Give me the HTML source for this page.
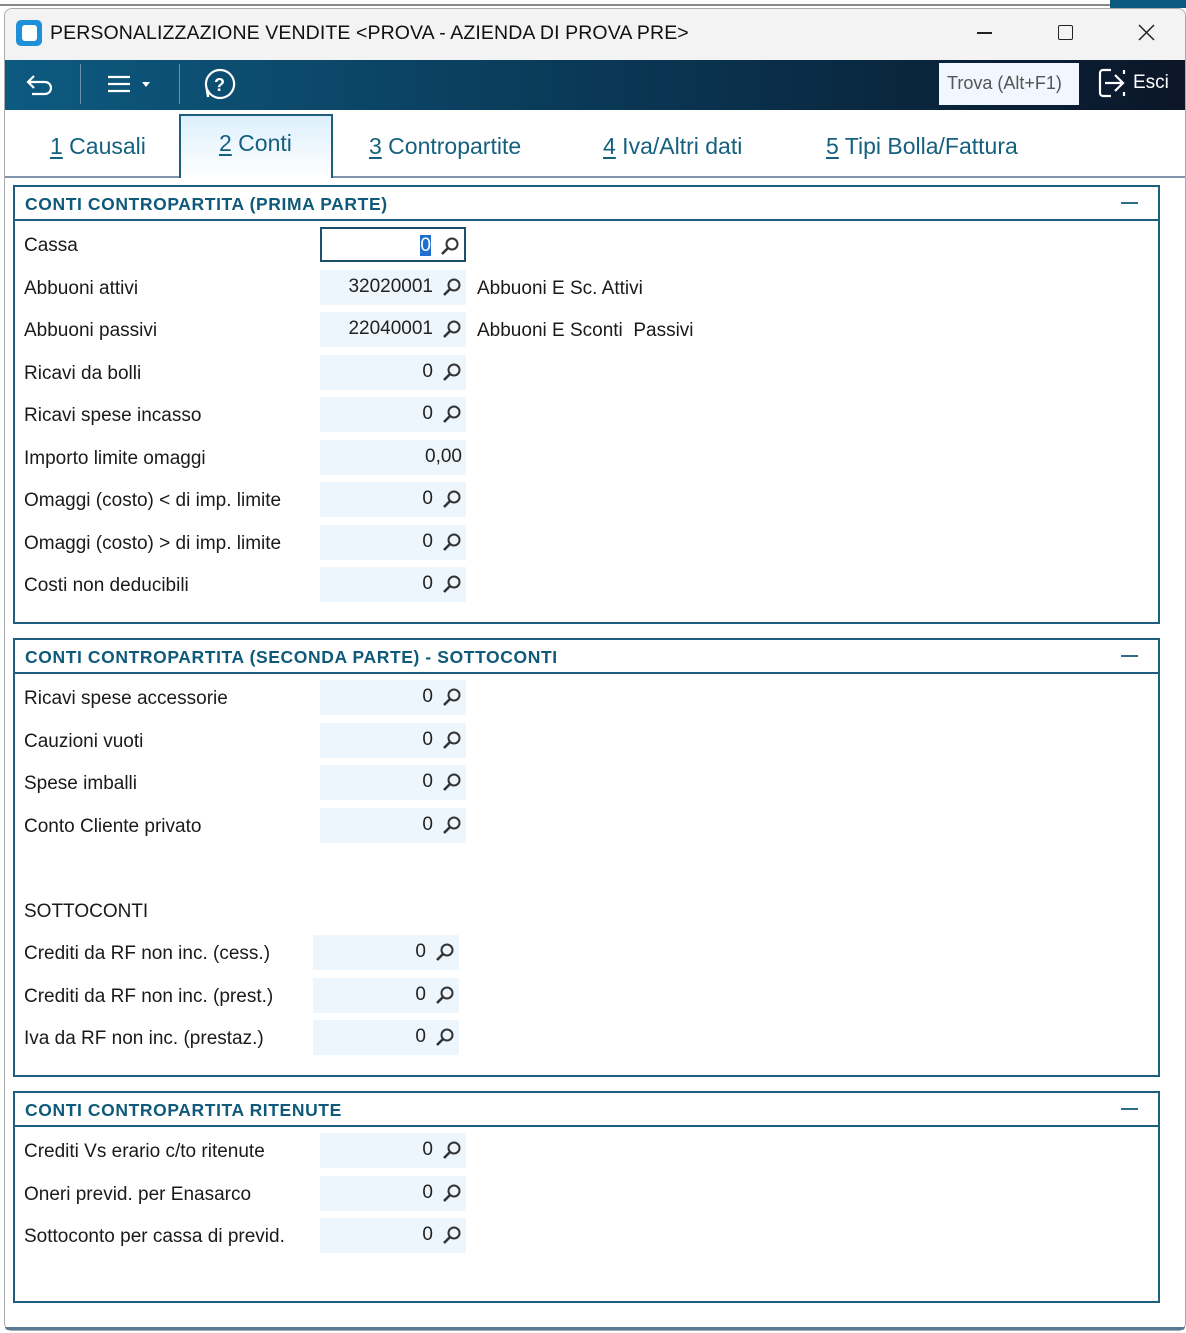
<!DOCTYPE html>
<html><head><meta charset="utf-8"><style>
*{margin:0;padding:0;box-sizing:border-box}
body{width:1186px;height:1333px;background:#fff;position:relative;overflow:hidden;font-family:"Liberation Sans",sans-serif;color:#111}
.a{position:absolute}
.lbl{position:absolute;left:24px;font-size:19px;line-height:22px;color:#1a1a1a;white-space:nowrap}
.fld{position:absolute;width:146px;height:35px;background:#eef6fd}
.fld .v{position:absolute;right:33px;top:6px;font-size:19px;line-height:22px;color:#222}
.fld svg{position:absolute;right:3px;top:7px}
.sec{position:absolute;left:13px;width:1147px;border:2px solid #1d5f7d}
.sec .h{height:34px;border-bottom:2px solid #1d5f7d;font-weight:bold;font-size:17.5px;letter-spacing:0.6px;color:#0f5a7a;padding:7px 0 0 10px;position:relative}
.sec .h:after{content:"";position:absolute;right:20px;top:15px;width:17px;height:2px;background:#2d6d8b}
.tab{position:absolute;top:133px;font-size:23px;color:#15607f;white-space:nowrap}
.tab u{text-underline-offset:3px}
</style></head><body>
<div class="a" style="left:0;top:4px;width:1110px;height:2px;background:#888"></div>
<div class="a" style="left:1110px;top:0;width:76px;height:8px;background:#0d5a80"></div>
<div class="a" style="left:4px;top:8px;width:1182px;height:1323px;border:1px solid #aaa;border-radius:8px;background:#fff"></div>
<div class="a" style="left:5px;top:9px;width:1180px;height:51px;background:#f3f3f3;border-radius:8px 8px 0 0"></div>
<div class="a" style="left:16px;top:20px;width:26px;height:26px;background:#1e90d8;border-radius:5px"></div>
<div class="a" style="left:22px;top:25px;width:15px;height:16px;background:#fff;border-radius:3px"></div>
<div class="a" style="left:50px;top:22px;font-size:19.5px;color:#111;letter-spacing:0.1px">PERSONALIZZAZIONE VENDITE &lt;PROVA - AZIENDA DI PROVA PRE&gt;</div>
<div class="a" style="left:977px;top:32px;width:15px;height:1.5px;background:#222"></div>
<div class="a" style="left:1058px;top:25px;width:15px;height:15px;border:1.5px solid #222;border-radius:2px"></div>
<svg class="a" style="left:1138px;top:24px" width="17" height="17"><path d="M1 1L16 16M16 1L1 16" stroke="#222" stroke-width="1.5"/></svg>
<div class="a" style="left:5px;top:60px;width:1180px;height:50px;background:linear-gradient(90deg,#0d5a80,#0a3552 55%,#0b1628)"></div>
<svg class="a" style="left:24px;top:70px" width="34" height="30"><path d="M10 6L4 12L10 18M4 12H21a6 6 0 0 1 0 12H8" stroke="#fff" stroke-width="2.2" fill="none"/></svg>
<div class="a" style="left:80px;top:64px;width:1px;height:40px;background:#6b93ad"></div>
<svg class="a" style="left:106px;top:72px" width="50" height="24"><path d="M2 5H24M2 12H24M2 19H24" stroke="#fff" stroke-width="2.2"/><path d="M36 10L44 10L40 15Z" fill="#fff"/></svg>
<div class="a" style="left:179px;top:64px;width:1px;height:40px;background:#6b93ad"></div>
<svg class="a" style="left:203px;top:67px" width="34" height="34"><path d="M17 3a14 14 0 1 1 -12 21L5 30L3 18A14 14 0 0 1 17 3Z" stroke="#fff" stroke-width="2.2" fill="none"/><text x="11" y="24" font-size="18" font-weight="bold" fill="#fff" font-family="Liberation Sans">?</text></svg>
<div class="a" style="left:939px;top:63px;width:140px;height:42px;background:#f0f7fe;font-size:18px;color:#555;padding:10px 0 0 8px">Trova (Alt+F1)</div>
<svg class="a" style="left:1098px;top:67px" width="34" height="34"><path d="M13 3H5a3 3 0 0 0 -3 3V26a3 3 0 0 0 3 3H13M7 16H24M17 8L25 16L17 24M26 3v4M26 25v4" stroke="#fff" stroke-width="2.2" fill="none"/></svg>
<div class="a" style="left:1133px;top:72px;font-size:19px;color:#fff">Esci</div>
<div class="a" style="left:5px;top:176px;width:1180px;height:2px;background:#7e95ab"></div>
<div class="a" style="left:179px;top:114px;width:154px;height:64px;border:2px solid #1d5f7d;border-bottom:none;background:linear-gradient(#ddf0fc,#fff)"></div>
<div class="tab" style="left:50px;top:133px"><u>1</u> Causali</div>
<div class="tab" style="left:219px;top:130px"><u>2</u> Conti</div>
<div class="tab" style="left:369px"><u>3</u> Contropartite</div>
<div class="tab" style="left:603px"><u>4</u> Iva/Altri dati</div>
<div class="tab" style="left:826px"><u>5</u> Tipi Bolla/Fattura</div>
<div class="a" style="left:5px;top:1327px;width:1180px;height:3px;background:#5a7a96;border-radius:0 0 6px 6px"></div>

<div class="sec" style="top:185px;height:439px"><div class="h">CONTI CONTROPARTITA (PRIMA PARTE)</div></div>
<div class="sec" style="top:638px;height:439px"><div class="h">CONTI CONTROPARTITA (SECONDA PARTE) - SOTTOCONTI</div></div>
<div class="sec" style="top:1091px;height:212px"><div class="h">CONTI CONTROPARTITA RITENUTE</div></div>

<div id="rows"></div>
<script>
var Q='<svg width="22" height="20"><circle cx="13" cy="8" r="5.5" stroke="#333" stroke-width="2" fill="none"/><path d="M9 12L3 18" stroke="#333" stroke-width="2.6"/></svg>';
var rows=[
["Cassa",244,"0",320,1],["Abbuoni attivi",287,"32020001",320,0,"Abbuoni E Sc. Attivi"],["Abbuoni passivi",329,"22040001",320,0,"Abbuoni E Sconti&nbsp; Passivi"],
["Ricavi da bolli",372,"0",320],["Ricavi spese incasso",414,"0",320],["Importo limite omaggi",457,"0,00",320,2],
["Omaggi (costo) &lt; di imp. limite",499,"0",320],["Omaggi (costo) &gt; di imp. limite",542,"0",320],["Costi non deducibili",584,"0",320],
["Ricavi spese accessorie",697,"0",320],["Cauzioni vuoti",740,"0",320],["Spese imballi",782,"0",320],["Conto Cliente privato",825,"0",320],
["SOTTOCONTI",910],["Crediti da RF non inc. (cess.)",952,"0",313],["Crediti da RF non inc. (prest.)",995,"0",313],["Iva da RF non inc. (prestaz.)",1037,"0",313],
["Crediti Vs erario c/to ritenute",1150,"0",320],["Oneri previd. per Enasarco",1193,"0",320],["Sottoconto per cassa di previd.",1235,"0",320]];
var h='';
rows.forEach(function(r){
h+='<div class="lbl" style="top:'+(r[1]-9)+'px">'+r[0]+'</div>';
if(r[2]){
var st='left:'+r[3]+'px;top:'+(r[1]-17)+'px;';
var v=r[2];
if(r[4]==1){st+='background:#fff;border:2px solid #1d4f6d;';v='<span style="background:#1f6fd0;color:#fff">0</span>';}
var ic=r[4]==2?'':Q;
var vs=r[4]==2?' style="right:4px"':'';
h+='<div class="fld" style="'+st+'"><span class="v"'+vs+'>'+v+'</span>'+ic+'</div>';
if(r[5])h+='<div class="lbl" style="left:477px;top:'+(r[1]-9)+'px">'+r[5]+'</div>';
}});
document.getElementById('rows').innerHTML=h;
</script>
</body></html>
